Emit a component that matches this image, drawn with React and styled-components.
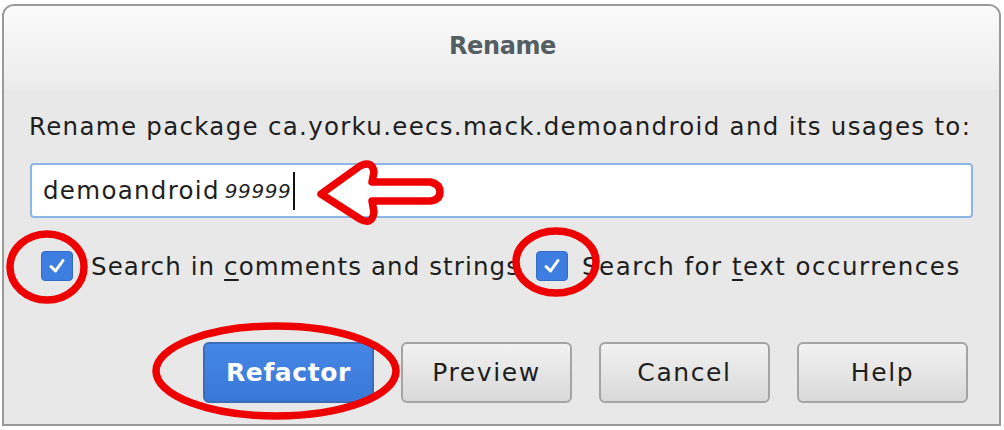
import React from 'react';
import styled, { createGlobalStyle } from 'styled-components';

const GlobalStyle = createGlobalStyle`
  html, body {
    margin: 0;
    padding: 0;
    background: #ffffff;
  }
  body {
    font-family: "DejaVu Sans", "Liberation Sans", sans-serif;
  }
`;

const Stage = styled.div`
  position: relative;
  width: 1004px;
  height: 430px;
  overflow: hidden;
  background: #ffffff;
`;

const Window = styled.div`
  margin: 4px 3px 0 2px;
  height: 422px;
  border: 2px solid #9a9a9a;
  border-radius: 12px 12px 0 0;
  background: #e8e8e8;
  display: flex;
  flex-direction: column;
  box-sizing: border-box;
`;

const TitleBar = styled.div`
  height: 84px;
  border-radius: 10px 10px 0 0;
  background: linear-gradient(#fbfbfb, #ebebeb);
  display: flex;
  align-items: center;
  justify-content: center;
`;

const Title = styled.h1`
  margin: 0 0 4px 2px;
  font-size: 24px;
  font-weight: bold;
  letter-spacing: -0.4px;
  color: #555e63;
`;

const Body = styled.div`
  padding: 22px 20px 0 25px;
  display: flex;
  flex-direction: column;
`;

const Prompt = styled.div`
  font-size: 24.5px;
  color: #1e1e1e;
  letter-spacing: 1.3px;
  white-space: nowrap;
`;

const Field = styled.div`
  margin-top: 22px;
  margin-left: 1px;
  height: 55px;
  width: 943px;
  box-sizing: border-box;
  border: 2px solid #8cb6e8;
  border-radius: 4px;
  background: #ffffff;
  display: flex;
  align-items: center;
  padding-left: 11px;
  font-size: 24.5px;
  letter-spacing: 1.3px;
  color: #1e1e1e;
  white-space: nowrap;
`;

const Small = styled.span`
  margin-left: 5px;
  font-style: italic;
  font-size: 20px;
  letter-spacing: 0.6px;
`;

const Caret = styled.span`
  display: inline-block;
  width: 2px;
  height: 38px;
  margin-left: 2px;
  background: #111111;
`;

const Options = styled.div`
  margin-top: 33px;
  margin-left: 12px;
  display: flex;
  align-items: center;
  white-space: nowrap;
`;

const Option = styled.label`
  display: flex;
  align-items: center;
  gap: ${p => p.inner}px;
  margin-right: ${p => p.gap || 0}px;
  font-size: 24.5px;
  color: #1e1e1e;
  letter-spacing: ${p => p.spacing}px;
`;

const Box = styled.span`
  width: 32px;
  height: 30px;
  border-radius: 4px;
  background: #3d7ee0;
  border: 1px solid #2f6bc8;
  box-sizing: border-box;
  display: flex;
  align-items: center;
  justify-content: center;
`;

const Key = styled.u`
  text-underline-offset: 4px;
`;

const Buttons = styled.div`
  margin-top: 61px;
  display: flex;
  justify-content: flex-end;
  gap: 27px;
  padding-right: 11px;
`;

const Button = styled.button`
  width: 171px;
  height: 61px;
  border-radius: 6px;
  font-family: "DejaVu Sans", "Liberation Sans", sans-serif;
  font-size: 25px;
  letter-spacing: ${p => (p.primary ? '0.6px' : '1.6px')};
  border: 2px solid ${p => (p.primary ? '#3a6cb8' : '#a4a4a4')};
  background: ${p => (p.primary ? 'linear-gradient(#4686e4, #3a78d8)' : 'linear-gradient(#f2f2f2, #d9d9d9)')};
  color: ${p => (p.primary ? '#ffffff' : '#1e1e1e')};
  font-weight: ${p => (p.primary ? 'bold' : 'normal')};
`;

const Marks = styled.svg`
  position: absolute;
  left: 0;
  top: 0;
  pointer-events: none;
`;

function Check() {
  return (
    <Box>
      <svg width="20" height="18" viewBox="0 0 20 18">
        <path d="M4 9.5 L8.5 14 L16 3.5" fill="none" stroke="#ffffff" strokeWidth="3" strokeLinecap="round" strokeLinejoin="round" />
      </svg>
    </Box>
  );
}

export default function App() {
  return (
    <Stage>
      <GlobalStyle />
      <Window>
        <TitleBar>
          <Title>Rename</Title>
        </TitleBar>
        <Body>
          <Prompt>Rename package ca.yorku.eecs.mack.demoandroid and its usages to:</Prompt>
          <Field>
            demoandroid<Small>99999</Small><Caret />
          </Field>
          <Options>
            <Option gap={16} inner={18} spacing={1.1}>
              <Check />
              <span>Search in <Key>c</Key>omments and strings</span>
            </Option>
            <Option inner={14} spacing={1.5}>
              <Check />
              <span>Search for <Key>t</Key>ext occurrences</span>
            </Option>
          </Options>
          <Buttons>
            <Button primary>Refactor</Button>
            <Button>Preview</Button>
            <Button>Cancel</Button>
            <Button>Help</Button>
          </Buttons>
        </Body>
      </Window>
      <Marks width="1004" height="430" viewBox="0 0 1004 430">
        <g fill="none" stroke="#ee0000" strokeWidth="7.5" strokeLinejoin="round" strokeLinecap="round">
          <path d="M321 194 L360 166 Q372 160 374 172 L372 182 L430 182 Q440 184 440 192 Q440 200 430 201 L372 201 L374 212 Q372 226 360 219 Z" />
          <ellipse cx="47" cy="267" rx="37" ry="33" />
          <ellipse cx="556" cy="262" rx="40" ry="31" />
          <ellipse cx="276" cy="371" rx="120" ry="45" />
        </g>
      </Marks>
    </Stage>
  );
}
